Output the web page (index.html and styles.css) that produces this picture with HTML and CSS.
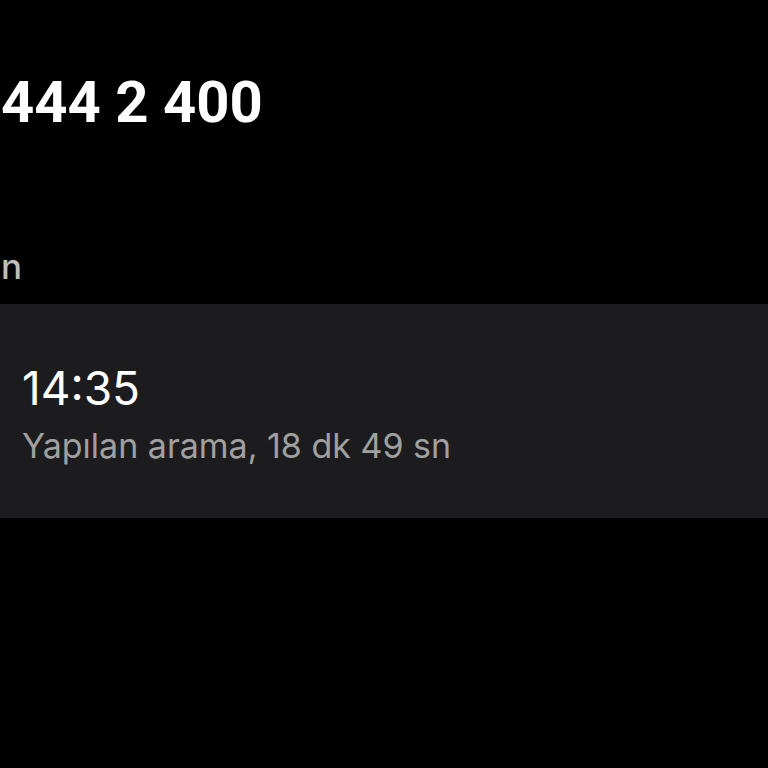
FILE: index.html
```html
<!DOCTYPE html>
<html lang="tr">
<head>
<meta charset="utf-8">
<link rel="stylesheet" href="styles.css">
</head>
<body>
<div class="page">
  <h1 class="number">444 2 400</h1>
  <div class="section-title">n</div>
  <div class="card">
    <div class="time">14:35</div>
    <div class="detail">Yapılan arama, 18 dk 49 sn</div>
  </div>
</div>
</body>
</html>
```
FILE: styles.css
```css
html, body {
  margin: 0;
  padding: 0;
  background: #000;
}
.page {
  width: 768px;
  height: 768px;
  overflow: hidden;
  font-family: Inter, Roboto, sans-serif;
  color: #fff;
  display: flex;
  flex-direction: column;
}
.number {
  margin: 0;
  padding: 72px 0 0 1px;
  font-family: Roboto, Inter, sans-serif;
  font-size: 58px;
  font-weight: 700;
  line-height: 60px;
  letter-spacing: 0;
}
.section-title {
  margin-top: 112px;
  padding-left: 1px;
  font-size: 35px;
  font-weight: 500;
  line-height: 44px;
  color: #bdbdbd;
}
.card {
  margin-top: 16px;
  height: 214px;
  box-sizing: border-box;
  background: #1c1c1e;
  padding: 58px 0 0 22px;
}
.time {
  font-size: 46px;
  font-weight: 400;
  line-height: 52px;
}
.detail {
  margin-top: 12px;
  font-size: 34px;
  font-weight: 400;
  line-height: 40px;
  color: #a0a0a0;
}
```
